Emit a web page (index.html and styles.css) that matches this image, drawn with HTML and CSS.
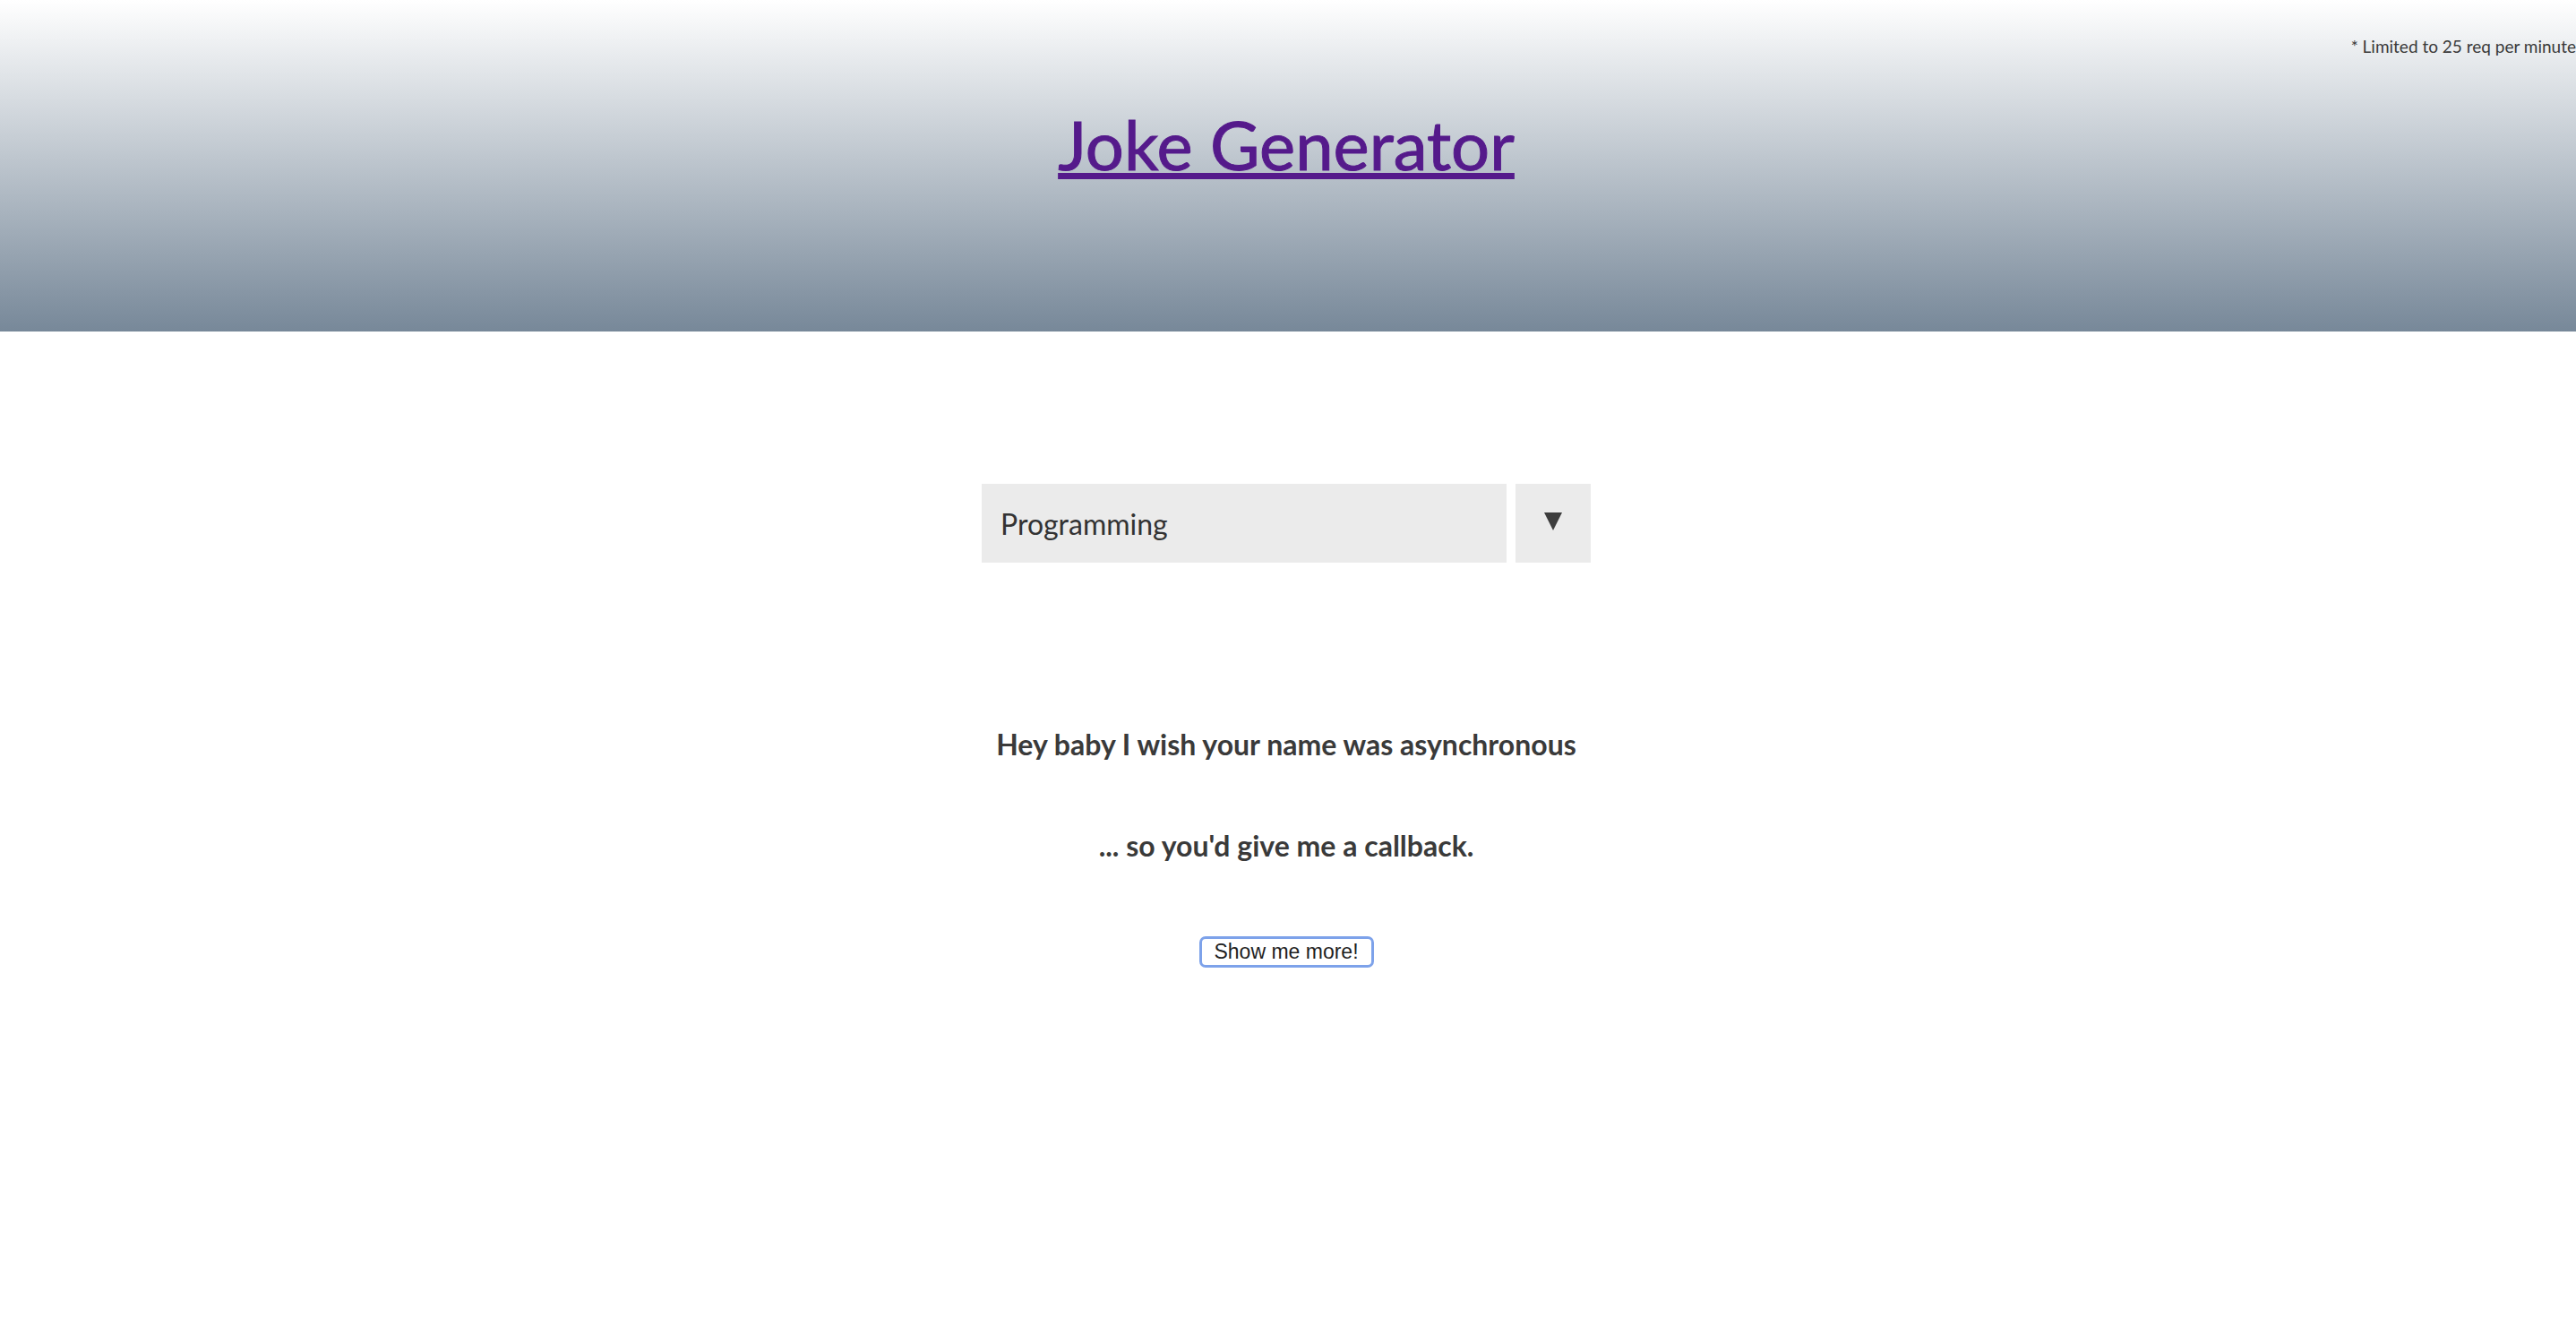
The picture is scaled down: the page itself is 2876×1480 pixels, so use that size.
FILE: index.html
```html
<!DOCTYPE html>
<html lang="en">
<head>
<meta charset="utf-8">
<title>Joke Generator</title>
<link rel="stylesheet" href="styles.css">
</head>
<body>
<header class="hero">
  <p class="note">* Limited to 25 req per minute</p>
  <h1 class="title"><a class="title-link" href="#">Joke Generator</a></h1>
</header>
<main class="content">
  <div class="picker">
    <select class="category">
      <option>Programming</option>
      <option>Misc</option>
      <option>Dark</option>
      <option>Pun</option>
    </select>
    <span class="arrow-box"><span class="arrow"></span></span>
  </div>
  <p class="joke setup">Hey baby I wish your name was asynchronous</p>
  <p class="joke delivery">... so you'd give me a callback.</p>
  <button class="more" type="button">Show me more!</button>
</main>
</body>
</html>
```
FILE: styles.css
```css
html, body {
  margin: 0;
  padding: 0;
  background: #ffffff;
}

body {
  font-family: "Lato", "Open Sans", sans-serif;
  color: #333333;
}

.hero {
  position: relative;
  height: 370px;
  box-sizing: border-box;
  padding-top: 115px;
  padding-right: 4px;
  background: linear-gradient(to bottom, #ffffff 0%, #778899 100%);
  text-align: center;
}

.note {
  position: absolute;
  top: 41px;
  right: 0;
  margin: 0;
  font-size: 19px;
  line-height: 1.2;
  color: #3a3a3a;
}

.title {
  margin: 0;
  font-size: 76px;
  font-weight: 400;
  line-height: 1.2;
  -webkit-text-stroke: 1px #551a8b;
}

.title-link {
  color: #551a8b;
  text-decoration: underline;
  text-decoration-thickness: 7px;
  text-underline-offset: 3px;
}

.content {
  display: flex;
  flex-direction: column;
  align-items: center;
  padding-top: 170px;
  padding-right: 4px;
}

.picker {
  display: flex;
  gap: 10px;
}

.category {
  appearance: none;
  -webkit-appearance: none;
  width: 586px;
  height: 88px;
  border: none;
  border-radius: 0;
  background: #ebebeb;
  color: #333333;
  font-family: "Lato", "Open Sans", sans-serif;
  font-size: 32px;
  padding: 0 0 0 21px;
  outline: none;
}

.arrow-box {
  width: 84px;
  height: 88px;
  background: #ebebeb;
  display: flex;
  align-items: center;
  justify-content: center;
}

.arrow {
  width: 0;
  height: 0;
  border-left: 10px solid transparent;
  border-right: 10px solid transparent;
  border-top: 20px solid #3d3d3d;
  margin-top: -4px;
}

.joke {
  margin: 0;
  font-size: 32px;
  font-weight: 700;
  line-height: 1.2;
  text-align: center;
  color: #3a3a3a;
}

.setup {
  margin-top: 184px;
}

.delivery {
  margin-top: 75px;
}

.more {
  margin-top: 81px;
  box-sizing: border-box;
  width: 195px;
  height: 35px;
  padding: 0;
  border: 3px solid #7da2ea;
  border-radius: 7px;
  background: #ffffff;
  color: #1f1f1f;
  font-family: "Liberation Sans", Arial, sans-serif;
  font-size: 23px;
  line-height: 1;
}
```
